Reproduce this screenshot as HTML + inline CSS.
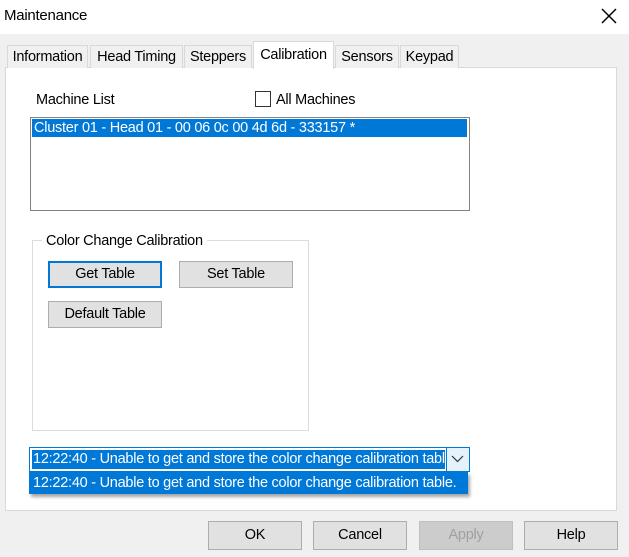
<!DOCTYPE html>
<html><head><style>
*{box-sizing:border-box;margin:0;padding:0}
body{width:629px;height:557px;background:#f0f0f0;font-family:"Liberation Sans",sans-serif;font-size:14.5px;color:#000;position:relative;overflow:hidden;letter-spacing:-0.25px}
.a{position:absolute}
.title{left:0;top:0;width:629px;height:34px;background:#fff}
.tab{position:absolute;top:45px;height:23px;border:1px solid #d9d9d9;border-bottom:none;background:#f0f0f0;text-align:center;line-height:22px}
.btn{position:absolute;background:#e1e1e1;border:1px solid #adadad;text-align:center}
</style></head><body>
<div class="a title"></div>
<div class="a" style="left:4px;top:7px;font-size:15px">Maintenance</div>
<svg class="a" style="left:601px;top:8px" width="16" height="16"><path d="M1 1L15 15M15 1L1 15" stroke="#000" stroke-width="1.5"/></svg>
<div class="a" style="left:5px;top:67px;width:612px;height:444px;background:#fff;border:1px solid #d9d9d9"></div>
<div class="tab" style="left:7px;width:81px">Information</div>
<div class="tab" style="left:90px;width:93px">Head Timing</div>
<div class="tab" style="left:184px;width:68px">Steppers</div>
<div class="tab" style="left:253px;top:41px;height:28px;width:81px;background:#fff;line-height:26px">Calibration</div>
<div class="tab" style="left:335px;width:64px">Sensors</div>
<div class="tab" style="left:400px;width:59px">Keypad</div>
<div class="a" style="left:36px;top:92px">Machine List</div>
<div class="a" style="left:255px;top:91px;width:16px;height:16px;border:1px solid #333;background:#fff"></div>
<div class="a" style="left:276px;top:92px">All Machines</div>
<div class="a" style="left:30px;top:117px;width:440px;height:94px;border:1px solid #828282;background:#fff"></div>
<div class="a" style="left:32px;top:119px;width:435px;height:18px;background:#0078d7;color:#fff;padding-left:2px;line-height:18px">Cluster 01 - Head 01 - 00 06 0c 00 4d 6d - 333157 *</div>
<div class="a" style="left:32px;top:240px;width:277px;height:191px;border:1px solid #dcdcdc"></div>
<div class="a" style="left:42px;top:233px;background:#fff;padding:0 4px">Color Change Calibration</div>
<div class="btn" style="left:48px;top:261px;width:114px;height:27px;border:2px solid #0078d7;line-height:23px">Get Table</div>
<div class="btn" style="left:179px;top:261px;width:114px;height:27px;line-height:25px">Set Table</div>
<div class="btn" style="left:48px;top:301px;width:114px;height:27px;line-height:25px">Default Table</div>
<div class="a" style="left:29px;top:447px;width:441px;height:25px;border:1px solid #0078d7;background:#fff"></div>
<div class="a" style="left:32px;top:450px;width:413px;height:19px;background:#0078d7;color:#fff;line-height:19px;padding-left:1px;overflow:hidden;white-space:nowrap">12:22:40 - Unable to get and store the color change calibration table.</div>
<div class="a" style="left:446px;top:448px;width:23px;height:23px;background:#e5f1fb;border-left:1px solid #0078d7"></div>
<svg class="a" style="left:451px;top:455px" width="13" height="8"><path d="M1 1L6.5 6.5L12 1" stroke="#333" fill="none" stroke-width="1.2"/></svg>
<div class="a" style="left:29px;top:472px;width:439px;height:22px;background:#0078d7;color:#fff;line-height:22px;padding-left:4px;box-shadow:2px 3px 3px rgba(0,0,0,.35);white-space:nowrap;overflow:hidden">12:22:40 - Unable to get and store the color change calibration table.</div>
<div class="btn" style="left:208px;top:521px;width:94px;height:29px;line-height:27px">OK</div>
<div class="btn" style="left:313px;top:521px;width:94px;height:29px;line-height:27px">Cancel</div>
<div class="btn" style="left:419px;top:521px;width:94px;height:29px;line-height:27px;color:#a0a0a0;background:#ccc;border-color:#bfbfbf">Apply</div>
<div class="btn" style="left:524px;top:521px;width:94px;height:29px;line-height:27px">Help</div>
</body></html>
